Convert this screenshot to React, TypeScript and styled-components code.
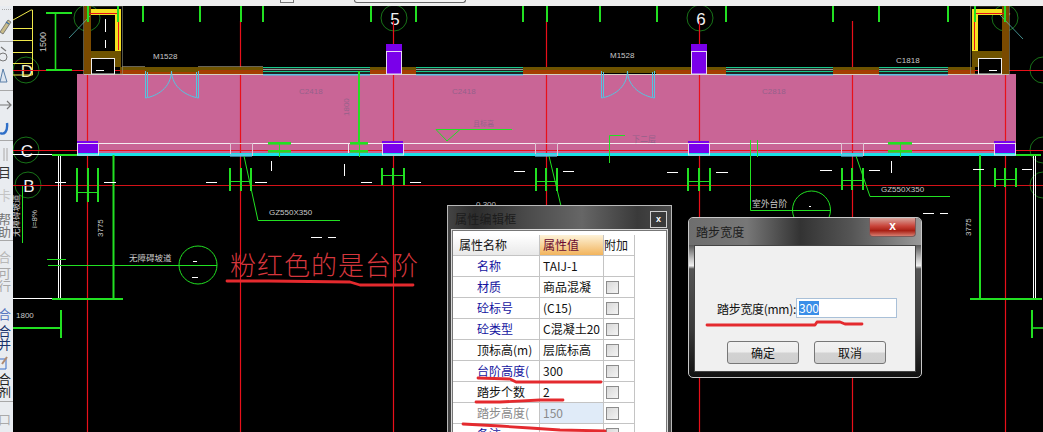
import React from "react";
import styled, { createGlobalStyle } from "styled-components";

const CJK = `"Noto Sans CJK SC", "Liberation Sans", sans-serif`;

const Global = createGlobalStyle`
  html, body { margin: 0; padding: 0; background: #000; }
  body { font-family: ${CJK}; overflow: hidden; }
`;

const Page = styled.div`
  width: 1043px;
  height: 432px;
  display: flex;
  flex-direction: column;
  overflow: hidden;
`;

const TopStrip = styled.header`
  height: 6px;
  flex: none;
  background: #eeeeee;
  display: flex;
  align-items: flex-start;
  padding-left: 280px;
  gap: 60px;
`;
const TopNotch = styled.span`
  width: 12px;
  height: 2px;
  border: 1px solid #777;
  border-top: 0;
  background: #f4f4f4;
`;
const TopPill = styled.span`
  width: 110px;
  height: 2px;
  border: 1px solid #666;
  border-top: 0;
  border-radius: 0 0 3px 3px;
  background: #f4f4f4;
`;

const Body = styled.main`
  flex: 1;
  min-height: 0;
  display: flex;
`;

const Toolbar = styled.nav`
  width: 13px;
  flex: none;
  background: #e9ecf0;
  display: flex;
  flex-direction: column;
  overflow: hidden;
`;
const ToolSep = styled.div<{ $after: number }>`
  height: 1px;
  flex: none;
  margin: ${(p) => p.$after}px 0 0;
  background: #a8a8a8;
`;
const ToolSlot = styled.div<{ $top: number; $h: number }>`
  height: ${(p) => p.$h}px;
  flex: none;
  margin-top: ${(p) => p.$top}px;
  display: block;
  overflow: hidden;
`;
const ToolGlyph = styled.div<{ $tone: string }>`
  font-size: 13px;
  line-height: 13px;
  width: 13px;
  word-break: break-all;
  color: ${(p) => p.$tone};
  margin-left: -2px;
`;

const Canvas = styled.section`
  position: relative;
  flex: 1;
  min-width: 0;
  background: #000;
  overflow: hidden;
`;
const Drawing = styled.svg`
  display: block;
  width: 100%;
  height: 100%;
`;
const Overlay = styled.svg`
  position: absolute;
  inset: 0;
  width: 100%;
  height: 100%;
  pointer-events: none;
`;

const Annotation = styled.div`
  position: absolute;
  left: 217px;
  top: 241px;
  font-size: 26px;
  line-height: 34px;
  letter-spacing: 1px;
  font-weight: 300;
  color: #d4363c;
  white-space: nowrap;
`;

const PropWindow = styled.div`
  position: absolute;
  left: 434px;
  top: 199px;
  width: 225px;
  height: 250px;
  box-sizing: border-box;
  border: 1px solid #b8b8b8;
  background: linear-gradient(90deg, #444 0%, #2c2c2c 12%, #4a4a4a 35%, #666 60%, #3a3a3a 85%, #4a4a4a 100%);
  padding: 0 4px;
`;
const PropTitleBar = styled.div`
  height: 24px;
  display: flex;
  align-items: center;
  justify-content: space-between;
  padding: 0 0 0 3px;
`;
const PropTitle = styled.span`
  font-size: 12px;
  color: #1c1c1c;
  letter-spacing: 0.3px;
`;
const PropClose = styled.span`
  width: 17px;
  height: 17px;
  box-sizing: border-box;
  border: 1px solid #cfcfcf;
  background: #3a3a3a;
  color: #fff;
  font: bold 9px/15px "Liberation Sans", sans-serif;
  text-align: center;
  margin-top: 2px;
  margin-right: 0;
`;
const PropBody = styled.div`
  background: #fff;
  border: 1px solid #777;
  outline: 1px solid #d8d8d8;
  height: 230px;
  padding-top: 4px;
  overflow: hidden;
`;
const PropTable = styled.div`
  width: 182px;
  margin-left: 0;
  display: grid;
  grid-template-columns: 87px 64px 31px;
  grid-auto-rows: 21px;
`;
const Cell = styled.div`
  box-sizing: border-box;
  font-size: 12px;
  line-height: 20px;
  border-right: 1px solid #c4c4c4;
  border-bottom: 1px solid #c4c4c4;
  white-space: nowrap;
  overflow: hidden;
  color: #111;
`;
const HeadCell = styled(Cell)`
  padding-left: 6px;
  background: linear-gradient(#ffffff, #e9e9e9);
`;
const HeadValueCell = styled(Cell)`
  padding-left: 3px;
  color: #6a0a30;
  background: linear-gradient(#fdf2d8, #f2b45c);
`;
const NameCell = styled(Cell)<{ $tone: string }>`
  padding-left: 24px;
  color: ${(p) => p.$tone};
`;
const ValueCell = styled(Cell)<{ $muted?: boolean }>`
  padding-left: 3px;
  color: ${(p) => (p.$muted ? "#8a8a8a" : "#111")};
  background: ${(p) => (p.$muted ? "#e0ebf8" : "#fff")};
`;
const AddCell = styled(Cell)`
  display: flex;
  align-items: center;
  padding-left: 2px;
`;
const CheckBox = styled.span`
  width: 13px;
  height: 13px;
  box-sizing: border-box;
  border: 1px solid #8c8c8c;
  background: linear-gradient(135deg, #d8d8d8, #f4f4f4);
`;

const WidthWindow = styled.div`
  position: absolute;
  left: 675px;
  top: 211px;
  width: 234px;
  height: 161px;
  box-sizing: border-box;
  border: 1px solid #c8c8c8;
  border-radius: 5px;
  padding: 0 5px 5px;
  display: flex;
  flex-direction: column;
  background: linear-gradient(180deg, #6a6a6a 0%, #4a4a4a 16%, #c8c8c8 26%, #f0f0f0 30%, #555 32%, #3a3a3a 70%, #111 100%);
`;
const WidthTitleBar = styled.div`
  height: 27px;
  flex: none;
  margin: 0 -5px;
  padding-left: 7px;
  display: flex;
  align-items: center;
  justify-content: space-between;
  border-radius: 4px 4px 0 0;
  background: linear-gradient(90deg, #6e6e6e 0%, #777 25%, #333 48%, #555 70%, #999 100%);
`;
const WidthTitle = styled.span`
  font-size: 12px;
  color: #1c1c1c;
  letter-spacing: 0.1px;
`;
const RedClose = styled.span`
  align-self: flex-start;
  width: 47px;
  height: 19px;
  margin-right: 5px;
  box-sizing: border-box;
  border: 1px solid #7a5a5a;
  border-top: 0;
  border-radius: 0 0 4px 4px;
  background: linear-gradient(#d8a49c 0%, #c9443a 45%, #a81f14 70%, #d87e70 100%);
  color: #fff;
  font: bold 12px/17px "Liberation Sans", sans-serif;
  text-align: center;
`;
const WidthPanel = styled.div`
  flex: 1;
  background: #f0f0f0;
  border: 1px solid #444;
  display: flex;
  flex-direction: column;
  padding: 52px 0 0 22px;
`;
const FieldRow = styled.div`
  display: flex;
  align-items: center;
  gap: 0;
  height: 20px;
`;
const FieldLabel = styled.label`
  font-size: 12px;
  letter-spacing: -0.3px;
  color: #111;
  white-space: nowrap;
`;
const FieldInput = styled.div`
  width: 101px;
  height: 20px;
  box-sizing: border-box;
  background: #fff;
  border: 1px solid #a9c0d8;
  padding: 2px;
  display: flex;
`;
const Selected = styled.span`
  background: #3a8ee8;
  color: #fff;
  font-size: 12px;
  line-height: 14px;
  padding: 0 0;
`;
const ButtonRow = styled.div`
  display: flex;
  gap: 15px;
  margin: 23px 0 0 10px;
`;
const DlgButton = styled.button`
  width: 72px;
  height: 23px;
  padding: 0;
  box-sizing: border-box;
  border: 1px solid #777;
  border-radius: 3px;
  background: linear-gradient(#f2f2f2 0%, #ededed 48%, #d2d2d2 52%, #cfcfcf 100%);
  font-family: ${CJK};
  font-size: 12px;
  color: #111;
`;

const GREEN = "#22e022";
const RED = "#e8101a";
const CYAN = "#19e3e8";
const DOOR = "#55c5e0";
const OLIVE = "#6e5300";
const BRICK = "#a43f00";
const DIM = "#c9c9c9";
const FAINT = "#96618a";

const gridX = [87.5, 240.5, 393.5, 546.5, 699.5, 852.5, 1005.5];
const topTicks = [88, 118, 143, 200, 241, 263, 371, 416, 523, 547, 600, 657, 726, 833, 879, 948, 975, 1005];
const wallSpans = [[120, 263], [370, 386], [402, 416], [523, 601], [656, 691], [707, 726], [833, 879], [948, 975]];
const windowSpans = [[263, 370], [416, 523], [726, 833], [879, 948]];
const topColumns = [386, 691];
const baseColumns = [77, 382, 688, 994];
const paleBays = [230, 535, 841];
const beams = [[268, 291], [350, 368], [888, 912]];
const footings = [
  { x: [77, 88, 98], y: 192.5, top: 168, bottom: 202 },
  { x: [230, 241, 251], y: 181.5, top: 168, bottom: 191 },
  { x: [382, 393, 404], y: 175.5, top: 168, bottom: 185 },
  { x: [536, 546, 557], y: 181.5, top: 168, bottom: 191 },
  { x: [688, 699, 710], y: 181.5, top: 168, bottom: 191 },
  { x: [842, 852, 863], y: 180.5, top: 168, bottom: 190 },
  { x: [995, 1005, 1016], y: 179.5, top: 168, bottom: 187 },
];
const whiteDashes = [
  [55, 66, 182.5], [104, 116, 182.5], [206, 217, 182.5], [255, 267, 182.5], [361, 372, 182.5], [410, 421, 182.5],
  [514, 525, 171.5], [563, 574, 171.5], [667, 678, 172.5], [716, 728, 172.5], [820, 832, 170.5], [869, 880, 170.5],
  [973, 984, 169.5], [1022, 1032, 169.5], [311, 322, 237.5], [328, 336, 237.5], [923, 934, 213.5], [940, 948, 213.5],
  [193, 197, 261.5], [192, 198, 277.5], [809, 811, 206.5],
];
const bubbles: [number, number, string, string][] = [
  [26, 70, "D", "#f2eec0"], [26, 150, "C", "#f2f2f2"], [28, 185, "B", "#f2f2f2"],
  [87, 18, "", "#fff"], [394, 18, "5", "#f2f2f2"], [700, 18, "6", "#f2f2f2"], [1005, 18, "7", "#8a8a8a"],
  [1043, 70, "", "#fff"], [1043, 150, "", "#fff"], [1043, 185, "", "#fff"],
];

const Tower = () => (
  <g>
    <rect x="83.5" y="6" width="39" height="68" fill="none" stroke="#8f8f7a" strokeWidth="0.6" />
    <rect x="84" y="6" width="7" height="68" fill="#7a4a00" />
    <rect x="91" y="9" width="30" height="6" fill="#f4e020" />
    <rect x="115" y="9" width="6" height="42" fill="#f4e020" />
    <path d="M87 13.5H118.5V50" fill="none" stroke={RED} strokeWidth="1" />
    <rect x="91" y="51" width="30" height="7" fill={OLIVE} />
    <rect x="115" y="51" width="6" height="16" fill={OLIVE} />
    <rect x="91.5" y="58.5" width="23" height="15.5" fill="#000" stroke="#eee" strokeWidth="1" />
    <path d="M96 70.5H104" stroke="#fff" strokeWidth="1" />
  </g>
);

const CadDrawing = () => (
  <Drawing viewBox="13 6 1030 426" preserveAspectRatio="none" fontFamily={CJK}>
    <rect x="77" y="74" width="939" height="80" fill="#c96596" />

    {bubbles.map(([cx, cy, letter, tone]) => (
      <g key={`${cx}-${cy}`}>
        <circle cx={cx} cy={cy} r="13" fill="none" stroke="#1e8f1e" strokeWidth="0.8" />
        {letter && (
          <text x={cx + 1} y={cy + 6.5} fontSize="17" fill={tone} textAnchor="middle" fontFamily="Liberation Sans">
            {letter}
          </text>
        )}
      </g>
    ))}

    <g stroke="#efe84a" strokeWidth="1" fill="none">
      <path d="M13 20L31 10H32.5V75H13" />
      <path d="M13 28.5H32M13 40.5H32M13 52.5H32M13 63.5H32" />
    </g>

    {gridX.map((x) => (
      <path key={x} d={`M${x} 21V432`} stroke={RED} strokeWidth="1.2" />
    ))}
    <path d="M13 70.5H1043M13 150.5H1043" stroke={RED} strokeWidth="1" />
    <path d="M13 185.5H1043" stroke="#d41218" strokeWidth="1" />

    {wallSpans.map(([a, b]) => (
      <g key={a}>
        <rect x={a} y="67" width={b - a} height="3.5" fill={OLIVE} />
        <rect x={a} y="70.5" width={b - a} height="3.5" fill={BRICK} />
      </g>
    ))}
    <rect x="145" y="67" width="53" height="5" fill={OLIVE} />
    <rect x="601" y="67" width="55" height="6" fill={OLIVE} />
    <path d="M122 66.5H145M198 66.5H263" stroke="#b0a890" strokeWidth="0.6" />
    <path d="M84 74.5H1009" stroke="#d8d2c4" strokeWidth="1" />

    {windowSpans.map(([a, b]) => (
      <g key={a} fill="none" strokeWidth="1">
        <rect x={a} y="67" width={b - a} height="8" fill="#222" stroke="none" />
        <path d={`M${a} 67.5H${b}M${a} 71.5H${b}`} stroke="#18c88a" />
        <path d={`M${a} 69.5H${b}`} stroke="#9a9a9a" />
        <path d={`M${a} 74.8H${b}`} stroke={DOOR} strokeWidth="1.4" />
      </g>
    ))}

    <Tower />
    <g transform="translate(1093 0) scale(-1 1)">
      <Tower />
    </g>
    <path d="M105.5 19V32M105.5 40V48" stroke="#fff" strokeWidth="1" />
    <path d="M69 38L90 16M1000 15L1023 39" stroke="#5fc8c8" strokeWidth="0.7" />

    {topColumns.map((x) => (
      <g key={x}>
        <rect x={x} y="44" width="16" height="30" fill="#7a00ea" />
        <rect x={x + 0.5} y="51.5" width="15" height="22.5" fill="none" stroke="#e8d8f4" strokeWidth="1" />
      </g>
    ))}

    {[145, 601].map((x) => (
      <path
        key={x}
        d={`M${x + 0.5} 71V98M${x + 2.5} 72V97M${x + 0.5} 98C${x + 12} 96 ${x + 26} 88 ${x + 26.5} 71C${x + 27} 88 ${x + 42} 96 ${x + 53.5} 98M${x + 53.5} 71V98M${x + 51.5} 72V97`}
        fill="none"
        stroke={DOOR}
        strokeWidth="1"
      />
    ))}

    {topTicks.map((x) => (
      <rect key={x} x={x - 1} y="6" width="2" height="16" fill={GREEN} />
    ))}

    <path d="M77.5 143.5H1016" stroke="#f4ecf0" strokeWidth="1" />
    <rect x="77" y="153" width="939" height="3" fill={CYAN} />
    {paleBays.map((x) => (
      <g key={x}>
        <rect x={x + 0.5} y="143.5" width="22" height="12" fill="none" stroke="#e0c4d4" strokeWidth="1" />
        <rect x={x} y="154" width="22" height="2.6" fill="#55c8e8" />
      </g>
    ))}
    <path d="M348.5 143.5V153" stroke="#f0e6ee" strokeWidth="1" />
    {baseColumns.map((x) => (
      <g key={x}>
        <rect x={x} y="141" width="21" height="12" fill="#7a00ea" />
        <rect x={x + 0.5} y="143.5" width="21" height="11.5" fill="none" stroke="#e8dcec" strokeWidth="1" />
      </g>
    ))}
    <path d="M13 154.5H52M13 298.5H52" stroke="#fff" strokeWidth="1" />
    <path d="M52 155H77M52 299H123M970 299H1042M1016 155H1041" stroke={GREEN} strokeWidth="2" />

    {beams.map(([a, b]) => (
      <g key={a}>
        <rect x={a} y="142" width={b - a} height="2.6" fill={GREEN} />
        <rect x={a} y="150" width={b - a} height="2.6" fill={GREEN} />
        <path d={`M${Math.floor((a + b) / 2) + 0.5} 142V157`} stroke={GREEN} strokeWidth="1" />
      </g>
    ))}
    <path d="M750.5 140V210.5H830M757.5 140V157" stroke={GREEN} strokeWidth="1" fill="none" />
    <rect x="358" y="71" width="2" height="72" fill={GREEN} />

    <path d="M55.5 13V70" stroke={GREEN} strokeWidth="1.6" />
    <path d="M46 13H72M46 70H72" stroke={GREEN} strokeWidth="2" />

    {footings.map((f) => (
      <g key={f.x[0]}>
        {f.x.map((x) => (
          <rect key={x} x={x - 1} y={f.top} width="2" height={f.bottom - f.top} fill={GREEN} />
        ))}
        <path d={`M${f.x[0]} ${f.y}H${f.x[2]}`} stroke={GREEN} strokeWidth="1" />
      </g>
    ))}
    <rect x="112.5" y="155" width="2" height="144" fill={GREEN} />
    <rect x="979" y="155" width="2" height="144" fill={GREEN} />
    <path d="M58.5 156V298M60.5 156V298M1033.5 156V298M1035.5 156V298" stroke="#fff" strokeWidth="1" />
    <path d="M271.5 161V171M344.5 164V176M891.5 161V173" stroke="#fff" strokeWidth="1" />
    {whiteDashes.map(([a, b, y]) => (
      <path key={`${a}-${y}`} d={`M${a} ${y}H${b}`} stroke="#fff" strokeWidth="1" />
    ))}

    <path d="M244 156L258 220.5H340M856 156L870 196.5H950M549 156L561 206" stroke={GREEN} strokeWidth="1" fill="none" />
    <path d="M47 259.5H66M48 265.5H217M22.5 186V243" stroke={GREEN} strokeWidth="1" fill="none" />
    <circle cx="198" cy="265" r="19" fill="none" stroke={GREEN} strokeWidth="1" />
    <circle cx="811.5" cy="210" r="19" fill="none" stroke={GREEN} strokeWidth="1" />
    <path d="M13 328H61" stroke={GREEN} strokeWidth="2" />
    <rect x="60" y="310" width="2" height="28" fill={GREEN} />
    <rect x="1031" y="310" width="2" height="28" fill={GREEN} />
    <path d="M1032 328H1043" stroke={GREEN} strokeWidth="1.6" />
    <path d="M436 129.5H512M436 129.5L447 141L460 129.5M609.5 163V135.5H625" stroke={GREEN} strokeWidth="1" fill="none" />

    <g fontFamily="Liberation Sans" fill={DIM} fontSize="8">
      <text x="153" y="59">M1528</text>
      <text x="610" y="58">M1528</text>
      <text x="896" y="63">C1818</text>
      <text x="269" y="215">GZ550X350</text>
      <text x="881" y="192">GZ550X350</text>
      <text x="16" y="318">1800</text>
      <text x="476" y="207" fill="#bbb">0.300</text>
      <text transform="translate(46 52) rotate(-90)" fontSize="9">1500</text>
      <text transform="translate(103 237) rotate(-90)">3775</text>
      <text transform="translate(971 236) rotate(-90)">3775</text>
      <text transform="translate(37 228) rotate(-90)">i=8%</text>
      <g fill={FAINT}>
        <text x="299" y="94">C2418</text>
        <text x="452" y="94">C2418</text>
        <text x="762" y="94">C2818</text>
        <text transform="translate(349 116) rotate(-90)">1800</text>
      </g>
    </g>
    <g fill={DIM} fontSize="8.5">
      <text x="129" y="261">无障碍坡道</text>
      <text x="752" y="207" fontSize="8.8">室外台阶</text>
      <text transform="translate(19 237) rotate(-90)">无障碍坡道</text>
      <g fill={FAINT}>
        <text x="473" y="126" fontSize="7">且标高</text>
        <text x="632" y="142" fontSize="8">下二层</text>
      </g>
    </g>
  </Drawing>
);

const Brush = () => (
  <Overlay viewBox="13 6 1030 426" preserveAspectRatio="none">
    <g fill="none" stroke="#e42a2e" strokeLinecap="round" strokeLinejoin="round" strokeWidth="2.8">
      <path d="M227 281L268 281L350 282L360 285L413 285" />
      <path d="M478 378L510 379L516 382L601 382" />
      <path d="M476 402L500 402L540 400L563 400" />
      <path d="M463 424L500 426L530 428L560 430L605 431" />
      <path d="M707 325L790 325L815 325L817 322L840 322L845 324L862 324" />
    </g>
  </Overlay>
);

const rows: { name: string; tone: string; value: string; muted?: boolean; check?: boolean }[] = [
  { name: "名称", tone: "#1414a0", value: "TAIJ-1", check: false },
  { name: "材质", tone: "#1414a0", value: "商品混凝" },
  { name: "砼标号", tone: "#1414a0", value: " (C15)" },
  { name: "砼类型", tone: "#1414a0", value: "C混凝土20" },
  { name: "顶标高(m)", tone: "#111", value: "层底标高" },
  { name: "台阶高度(", tone: "#1414a0", value: "300" },
  { name: "踏步个数", tone: "#111", value: "2" },
  { name: "踏步高度(", tone: "#8a8a8a", value: "150", muted: true },
  { name: "备注", tone: "#1414a0", value: "" },
];

const PropertyWindow = () => (
  <PropWindow>
    <PropTitleBar>
      <PropTitle>属性编辑框</PropTitle>
      <PropClose>x</PropClose>
    </PropTitleBar>
    <PropBody>
      <PropTable>
        <HeadCell>属性名称</HeadCell>
        <HeadValueCell>属性值</HeadValueCell>
        <Cell>附加</Cell>
        {rows.map((r) => (
          <React.Fragment key={r.name}>
            <NameCell $tone={r.tone}>{r.name}</NameCell>
            <ValueCell $muted={r.muted}>{r.value}</ValueCell>
            <AddCell>{r.check === false ? null : <CheckBox />}</AddCell>
          </React.Fragment>
        ))}
      </PropTable>
    </PropBody>
  </PropWindow>
);

const StepWidthWindow = () => (
  <WidthWindow>
    <WidthTitleBar>
      <WidthTitle>踏步宽度</WidthTitle>
      <RedClose>x</RedClose>
    </WidthTitleBar>
    <WidthPanel>
      <FieldRow>
        <FieldLabel>踏步宽度(mm):</FieldLabel>
        <FieldInput>
          <Selected>300</Selected>
        </FieldInput>
      </FieldRow>
      <ButtonRow>
        <DlgButton>确定</DlgButton>
        <DlgButton>取消</DlgButton>
      </ButtonRow>
    </WidthPanel>
  </WidthWindow>
);

const IconBox = styled.svg`
  display: block;
  width: 13px;
  height: 100%;
`;

const Tools = () => (
  <Toolbar>
    <ToolSlot $top={2} $h={3}>
      <IconBox viewBox="0 0 13 3">
        <path d="M2 1.5H11" stroke="#aaa" strokeWidth="1" strokeDasharray="1 1" />
      </IconBox>
    </ToolSlot>
    <ToolSlot $top={6} $h={18}>
      <IconBox viewBox="0 0 13 18">
        <path d="M0 15L8 3L11 5L3 17Z" fill="#c9bc8a" stroke="#666" strokeWidth="0.8" />
        <path d="M6 5L9 7" stroke="#3a6ea8" strokeWidth="1.4" />
      </IconBox>
    </ToolSlot>
    <ToolSep $after={6} />
    <ToolSlot $top={3} $h={18}>
      <IconBox viewBox="0 0 13 18">
        <path d="M1 2L6 6" stroke="#777" strokeWidth="1.2" />
        <ellipse cx="3" cy="12" rx="4" ry="4" fill="none" stroke="#777" strokeWidth="1" />
      </IconBox>
    </ToolSlot>
    <ToolSlot $top={4} $h={17}>
      <IconBox viewBox="0 0 13 17">
        <path d="M0 15H7L3 2Z" fill="#dde6f0" stroke="#5a7fa8" strokeWidth="1" />
      </IconBox>
    </ToolSlot>
    <ToolSep $after={6} />
    <ToolSlot $top={6} $h={16}>
      <IconBox viewBox="0 0 13 16">
        <path d="M0 8H10M7 4L11 8L7 12" fill="none" stroke="#777" strokeWidth="1.2" />
      </IconBox>
    </ToolSlot>
    <ToolSlot $top={6} $h={17}>
      <IconBox viewBox="0 0 13 17">
        <path d="M0 14C4 16 8 13 7 4" fill="none" stroke="#2f6fc8" strokeWidth="2.4" />
      </IconBox>
    </ToolSlot>
    <ToolSep $after={4} />
    <ToolSlot $top={6} $h={15}>
      <IconBox viewBox="0 0 13 15">
        <path d="M4 1V14M7 1V14" stroke="#bdbdbd" strokeWidth="1.4" />
      </IconBox>
    </ToolSlot>
    <ToolSlot $top={3} $h={16}>
      <ToolGlyph $tone="#333">目</ToolGlyph>
    </ToolSlot>
    <ToolSlot $top={7} $h={18}>
      <ToolGlyph $tone="#c4c4c4">卡</ToolGlyph>
    </ToolSlot>
    <ToolSlot $top={6} $h={26}>
      <ToolGlyph $tone="#777">帮助</ToolGlyph>
    </ToolSlot>
    <ToolSep $after={2} />
    <ToolSlot $top={9} $h={14}>
      <ToolGlyph $tone="#b8b8b8">合</ToolGlyph>
    </ToolSlot>
    <ToolSlot $top={2} $h={26}>
      <ToolGlyph $tone="#a8a8a8">可行</ToolGlyph>
    </ToolSlot>
    <ToolSlot $top={15} $h={14}>
      <ToolGlyph $tone="#5a78c0">合</ToolGlyph>
    </ToolSlot>
    <ToolSlot $top={3} $h={28}>
      <ToolGlyph $tone="#16306a">合并</ToolGlyph>
    </ToolSlot>
    <ToolSlot $top={2} $h={17}>
      <IconBox viewBox="0 0 13 17">
        <path d="M0 5H6V15H0" fill="none" stroke="#3a6ec8" strokeWidth="1" />
        <path d="M2 10L7 3" stroke="#b08a70" strokeWidth="2" />
      </IconBox>
    </ToolSlot>
    <ToolSlot $top={1} $h={26}>
      <ToolGlyph $tone="#222">合剂</ToolGlyph>
    </ToolSlot>
    <ToolSep $after={3} />
    <ToolSlot $top={10} $h={14}>
      <ToolGlyph $tone="#aaa">口</ToolGlyph>
    </ToolSlot>
  </Toolbar>
);

export default function App() {
  return (
    <>
      <Global />
      <Page>
        <TopStrip>
          <TopNotch />
          <TopPill />
        </TopStrip>
        <Body>
          <Tools />
          <Canvas>
            <CadDrawing />
            <Annotation>粉红色的是台阶</Annotation>
            <PropertyWindow />
            <StepWidthWindow />
            <Brush />
          </Canvas>
        </Body>
      </Page>
    </>
  );
}
